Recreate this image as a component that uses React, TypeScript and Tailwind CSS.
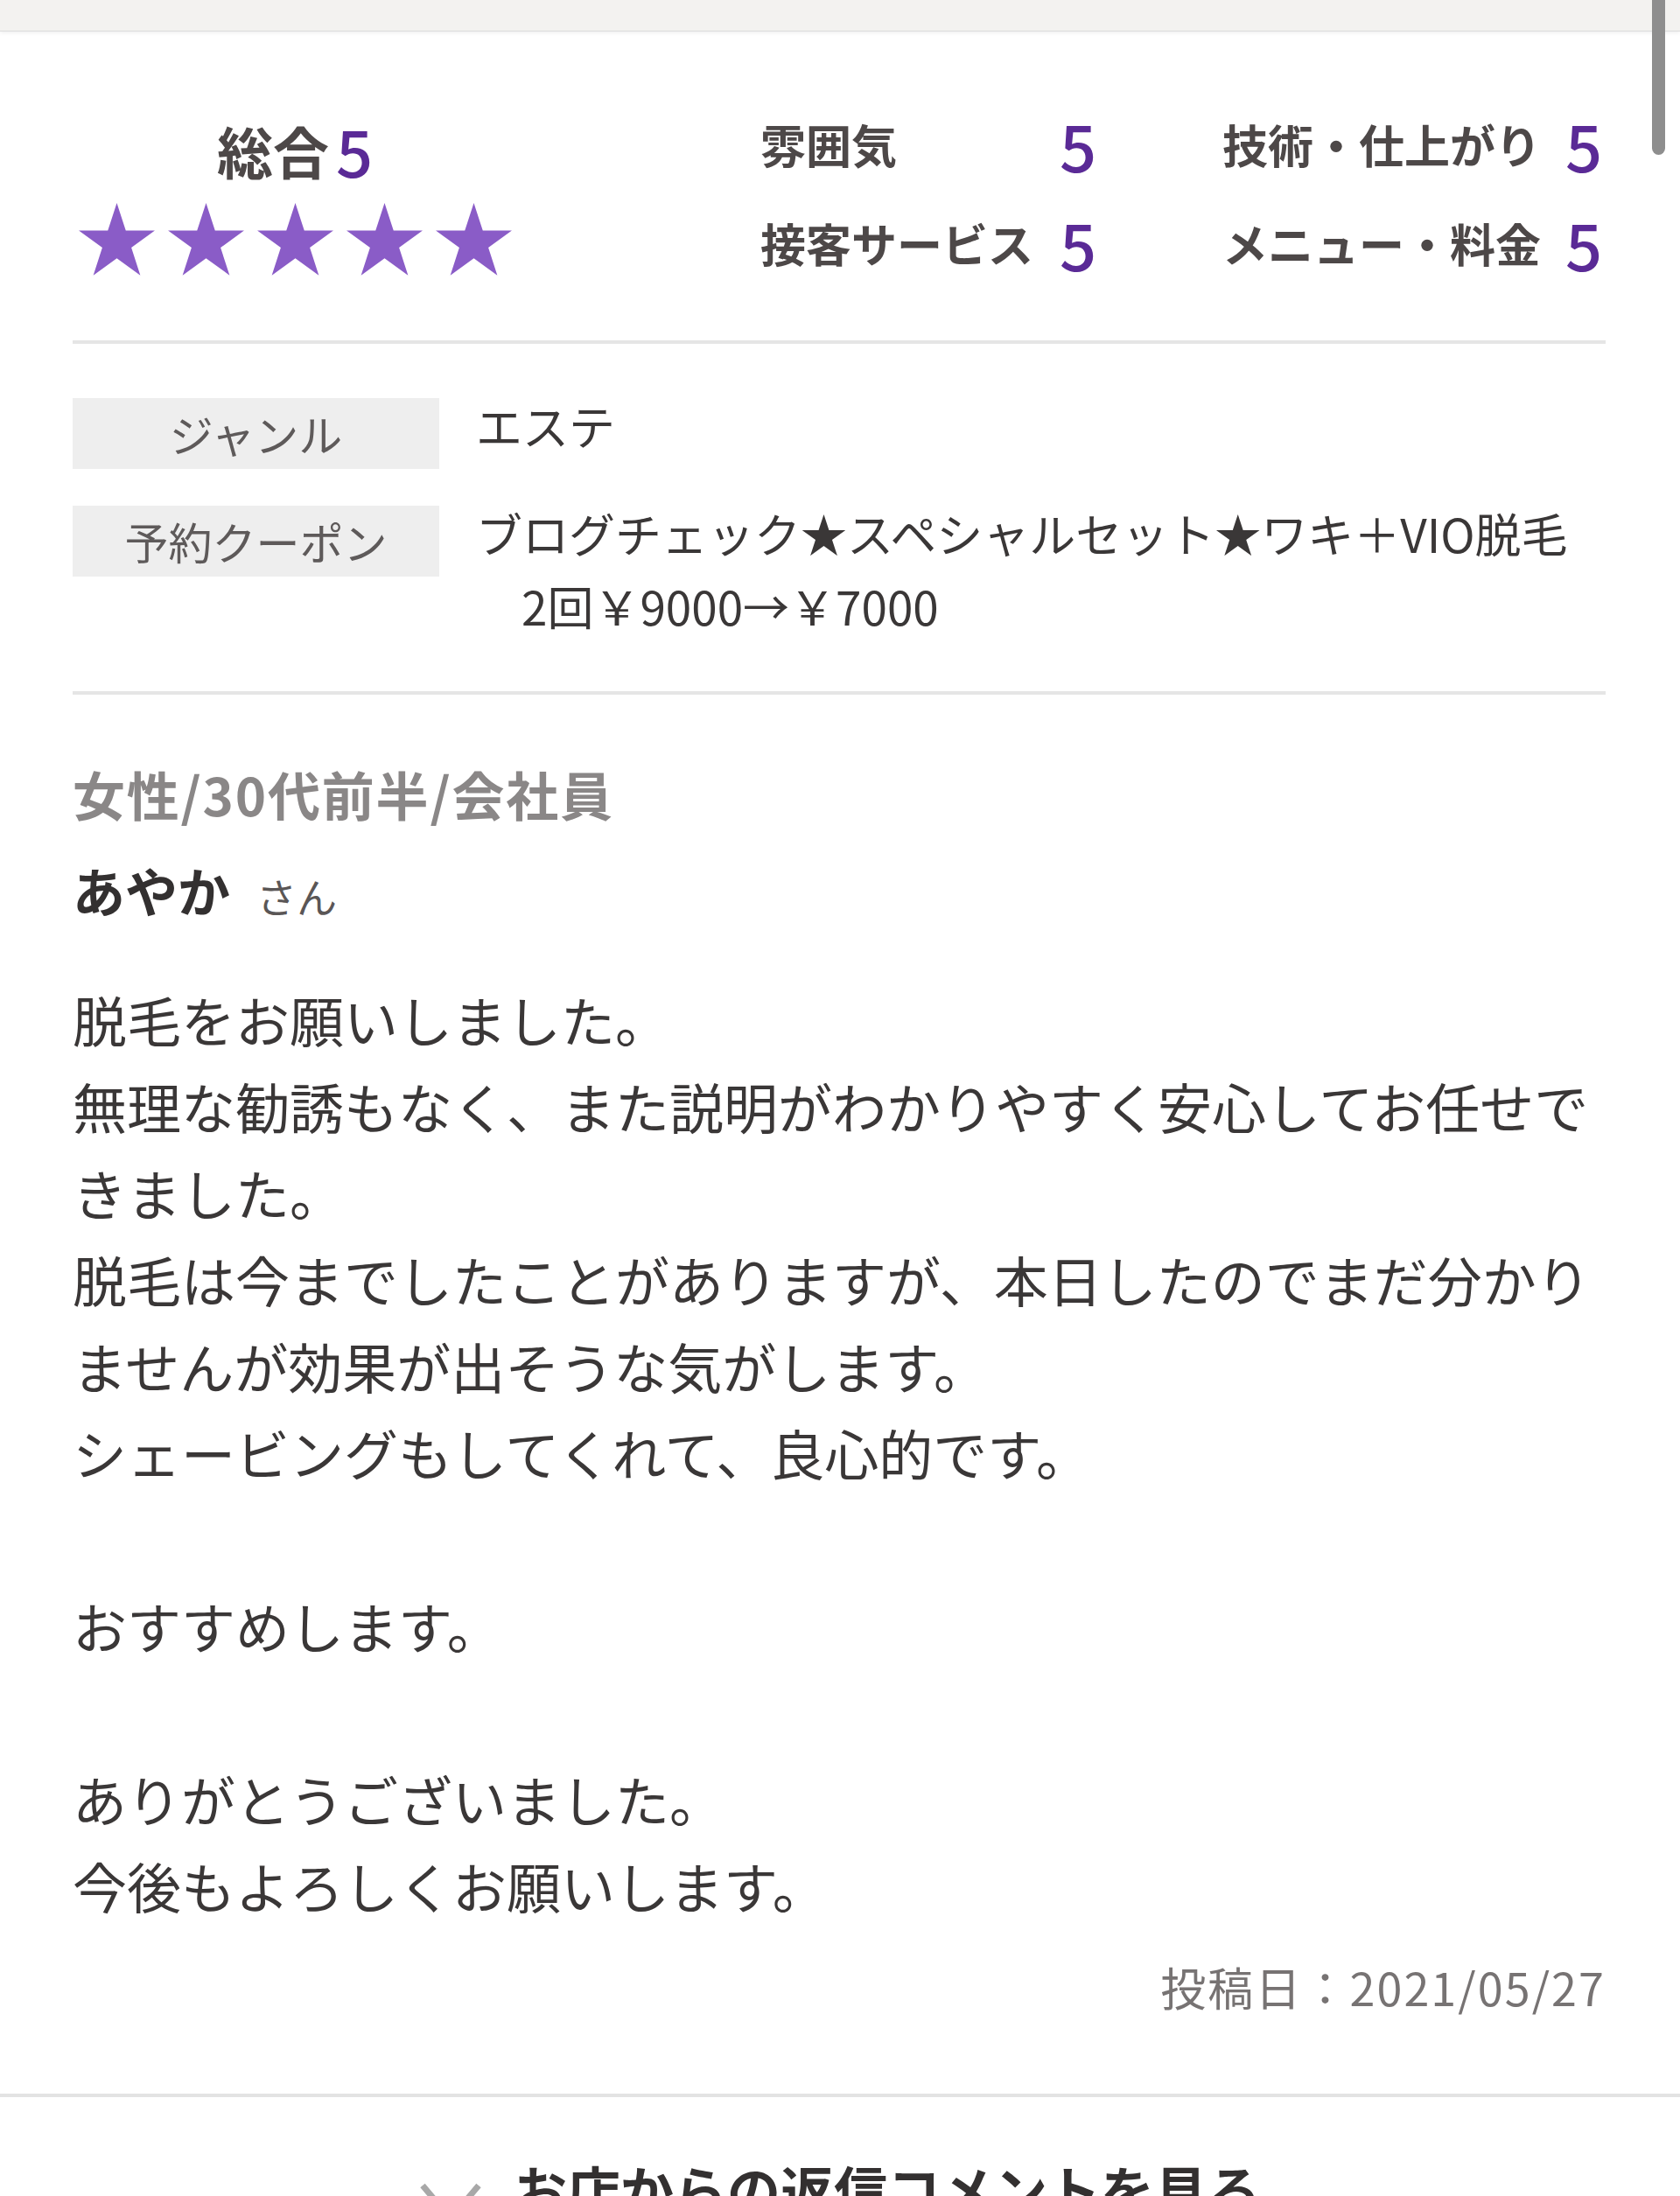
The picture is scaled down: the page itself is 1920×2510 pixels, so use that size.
import React from "react";

const ratings = [
  { label: "雰囲気", value: 5, label2: "技術・仕上がり", value2: 5 },
  { label: "接客サービス", value: 5, label2: "メニュー・料金", value2: 5 },
];

const bodyLines = [
  "脱毛をお願いしました。",
  "無理な勧誘もなく、また説明がわかりやすく安心してお任せで",
  "きました。",
  "脱毛は今までしたことがありますが、本日したのでまだ分かり",
  "ませんが効果が出そうな気がします。",
  "シェービングもしてくれて、良心的です。",
  "",
  "おすすめします。",
  "",
  "ありがとうございました。",
  "今後もよろしくお願いします。",
];

function Star() {
  return (
    <svg width="87" height="83" viewBox="0 0 87 83">
      <polygon
        points="43.5,0 53.76,31.57 86.96,31.58 60.1,51.1 70.36,82.67 43.5,63.16 16.64,82.67 26.9,51.1 0.04,31.58 33.24,31.57"
        fill="#8a5cc7"
      />
    </svg>
  );
}

export default function App() {
  return (
    <div className="relative w-[1920px] h-[2510px] overflow-hidden bg-white font-['Noto_Sans_CJK_JP',sans-serif]">
      {/* top bar */}
      <div className="h-[36px] bg-[#f3f2f0] border-b border-[#dcdcdc] shadow-[0_2px_4px_rgba(0,0,0,0.06)]" />
      {/* scrollbar */}
      <div className="absolute top-0 right-[17px] w-[15px] h-[177px] rounded-b-full bg-[#8e8e8e]" />

      <div className="pl-[83px] pr-[85px]">
        {/* ratings */}
        <div className="flex items-start pt-[79px] pb-[61px]">
          <div className="w-[508px] flex flex-col items-center pt-[16px]">
            <div className="flex items-center gap-[8px] leading-[80px]">
              <span className="text-[64px] font-bold text-[#4d4848]">総合</span>
              <span className="text-[74px] font-medium text-[#5a2a96]">5</span>
            </div>
            <div className="flex gap-[15px] mt-[21px]">
              {[0, 1, 2, 3, 4].map((i) => (
                <Star key={i} />
              ))}
            </div>
          </div>
          <div className="ml-[278px] flex flex-col gap-y-[13px]">
            {ratings.map((r) => (
              <div key={r.label} className="flex items-center h-[100px] leading-[100px]">
                <span className="w-[342px] text-[52px] font-bold text-[#4d4848] whitespace-nowrap">
                  {r.label}
                </span>
                <span className="w-[186px] text-[74px] font-medium text-[#5a2a96]">
                  {r.value}
                </span>
                <span className="w-[392px] text-[52px] font-bold text-[#4d4848] whitespace-nowrap">
                  {r.label2}
                </span>
                <span className="text-[74px] font-medium text-[#5a2a96]">
                  {r.value2}
                </span>
              </div>
            ))}
          </div>
        </div>

        <div className="h-[4px] bg-[#e5e5e5]" />

        {/* info table */}
        <div className="flex flex-col gap-[42px] mt-[62px]">
          <div className="flex items-start">
            <div className="w-[419px] h-[81px] bg-[#eeeeee] flex items-center justify-center text-[50px] text-[#5e5a5a]">
              ジャンル
            </div>
            <div className="ml-[42px] -mt-[10px] text-[53px] leading-[83px] text-[#3a3737]">
              エステ
            </div>
          </div>
          <div className="flex items-start">
            <div className="w-[419px] h-[81px] bg-[#eeeeee] flex items-center justify-center text-[50px] text-[#5e5a5a]">
              予約クーポン
            </div>
            <div className="ml-[42px] -mt-[10px] text-[53px] leading-[83px] text-[#3a3737] whitespace-nowrap">
              <div>ブログチェック★スペシャルセット★ワキ＋VIO脱毛</div>
              <div className="pl-[52px]">2回￥9000→￥7000</div>
            </div>
          </div>
        </div>

        <div className="h-[4px] bg-[#e5e5e5] mt-[56px]" />

        {/* reviewer */}
        <div className="mt-[73px] text-[60px] leading-[80px] font-bold tracking-[0.03em] text-[#8a8787]">
          女性/30代前半/会社員
        </div>
        <div className="mt-[30px] flex items-baseline gap-[30px] leading-[80px]">
          <span className="text-[60px] font-bold text-[#333030]">あやか</span>
          <span className="text-[46px] text-[#5a5656]">さん</span>
        </div>

        {/* body */}
        <div className="mt-[53px] text-[62px] leading-[99px] text-[#3a3737] whitespace-nowrap">
          {bodyLines.map((line, i) => (
            <div key={i} className="h-[99px]">
              {line}
            </div>
          ))}
        </div>

        <div className="mt-[36px] text-right text-[52px] leading-[60px] tracking-[0.04em] text-[#777373]">
          投稿日：2021/05/27
        </div>
      </div>

      <div className="h-[4px] bg-[#e3e3e3] mt-[92px]" />

      {/* reply toggle */}
      <div className="mt-[65px] flex items-center justify-center gap-[36px] leading-[80px]">
        <svg width="72" height="46" viewBox="0 0 72 46" className="mt-[30px]">
          <polyline
            points="4,4 36,42 68,4"
            fill="none"
            stroke="#a8a8a8"
            strokeWidth="7"
          />
        </svg>
        <span className="text-[61px] font-bold text-[#333030] whitespace-nowrap">
          お店からの返信コメントを見る
        </span>
      </div>
    </div>
  );
}
